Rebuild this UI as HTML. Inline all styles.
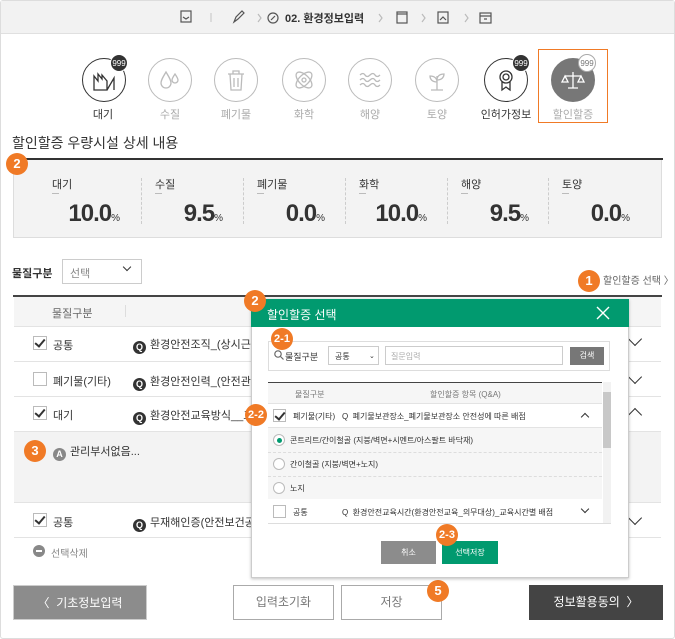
<!DOCTYPE html>
<html><head><meta charset="utf-8"><style>
*{box-sizing:border-box;margin:0;padding:0}
body{width:675px;height:639px;background:#fff;font-family:"Liberation Sans","Noto Sans CJK KR",sans-serif;color:#333;position:relative;overflow:hidden;font-size:11px}
.a{position:absolute}
.frame{left:0;top:0;width:675px;height:639px;border:1px solid #ddd;border-radius:3px}
.top{left:1px;top:1px;width:673px;height:33px;background:#f2f2f2;border-bottom:1px solid #e0e0e0}
.badge{position:absolute;width:22px;height:22px;border-radius:50%;background:#f07a26;color:#fff;font-weight:bold;font-size:13px;text-align:center;line-height:22px}
.ic{position:absolute;width:44px;height:44px;border-radius:50%;border:1.5px solid #bbb;background:#fff}
.ic.d{border-color:#333}
.lab{position:absolute;font-size:11px;color:#aaa;width:70px;text-align:center}
.n999{position:absolute;width:18px;height:18px;border-radius:50%;background:#333;color:#fff;font-size:8px;text-align:center;line-height:18px;border:1px solid #fff}
.col{position:absolute;top:158px;height:80px;width:110px}
.col .t{position:absolute;left:14px;top:18px;font-size:11px;color:#333}
.col .u{position:absolute;left:14px;top:35px;width:7px;height:1px;background:#bbb}
.col .v{position:absolute;right:28px;top:42px;font-size:24px;font-weight:bold;color:#333;letter-spacing:-1px}
.col .v small{font-size:10px;font-weight:normal;letter-spacing:0}
.sep{position:absolute;top:178px;height:46px;border-left:1px dashed #ccc}
.cb{position:absolute;width:14px;height:14px;border:1px solid #bbb;background:#fff}
.cb.on::after{content:"";position:absolute;left:3px;top:0px;width:4px;height:8px;border:solid #333;border-width:0 2px 2px 0;transform:rotate(40deg)}
.q{display:inline-block;width:13px;height:13px;border-radius:50%;background:#333;color:#fff;font-size:9px;font-weight:bold;text-align:center;line-height:13px;margin-right:4px;vertical-align:-2px}
.row{position:absolute;left:14px;width:647px;border-bottom:1px solid #e3e3e3}
.chev{position:absolute;width:10px;height:10px;border:solid #333;border-width:0 1.5px 1.5px 0}
.btn{position:absolute;text-align:center;font-size:12px}
.radio{position:absolute;width:12px;height:12px;border-radius:50%;border:1px solid #bbb;background:#fff}
.qt{position:absolute;left:133px;font-size:11px}
</style></head><body>
<div class="a frame"></div>
<div class="a top"></div>
<svg class="a" style="left:180px;top:8px" width="320" height="20" fill="none" stroke="#555" stroke-width="1.2">
<rect x="1" y="3" width="10" height="11"/><path d="M3 9l3 2 3-2"/>
<line x1="31" y1="5" x2="31" y2="14" stroke="#ccc"/>
<path d="M54 14l2-5 6-6 2 2-6 6z"/>
<path d="M78 6l3 4-3 4" stroke="#bbb"/>
<circle cx="93" cy="10" r="5"/><path d="M91 12l4-4"/>
<path d="M199 6l3 4-3 4" stroke="#bbb"/>
<rect x="217" y="4" width="10" height="11"/><path d="M217 6h10"/>
<path d="M242 6l3 4-3 4" stroke="#bbb"/>
<rect x="258" y="4" width="10" height="11"/><path d="M260 12l3-3 3 3"/>
<path d="M285 6l3 4-3 4" stroke="#bbb"/>
<rect x="300" y="5" width="11" height="10"/><path d="M300 8h11M304 11h3"/>
</svg>
<div class="a" style="left:285px;top:10px;font-size:11px;font-weight:bold;color:#333">02. 환경정보입력</div>

<div class="ic d" style="left:82px;top:58px"></div><div class="n999" style="left:110px;top:54px">999</div>
<svg class="a" style="left:92px;top:68px" width="24" height="24" fill="none" stroke="#333" stroke-width="1.3"><path d="M2 22V8l4 5V6l4 5V7l5 6v9zM15 22l7-12v12"/></svg>
<div class="lab" style="left:68px;top:106px;color:#333">대기</div>
<div class="ic" style="left:148px;top:58px"></div>
<svg class="a" style="left:158px;top:68px" width="24" height="24" fill="none" stroke="#bbb" stroke-width="1.3"><path d="M8 4c-3 5-5 8-5 11a5 5 0 0010 0c0-3-2-6-5-11zM17 6c-2 3-3 5-3 6a3 3 0 006 0c0-1-1-3-3-6z"/></svg>
<div class="lab" style="left:135px;top:106px">수질</div>
<div class="ic" style="left:214px;top:58px"></div>
<svg class="a" style="left:224px;top:68px" width="24" height="24" fill="none" stroke="#bbb" stroke-width="1.3"><path d="M4 6h16M9 6V3h6v3M6 6l1 16h10l1-16M10 10v9M14 10v9"/></svg>
<div class="lab" style="left:201px;top:106px">폐기물</div>
<div class="ic" style="left:282px;top:58px"></div>
<svg class="a" style="left:292px;top:68px" width="24" height="24" fill="none" stroke="#bbb" stroke-width="1.3"><ellipse cx="12" cy="12" rx="10" ry="5" transform="rotate(45 12 12)"/><ellipse cx="12" cy="12" rx="10" ry="5" transform="rotate(-45 12 12)"/><circle cx="12" cy="12" r="2"/></svg>
<div class="lab" style="left:269px;top:106px">화학</div>
<div class="ic" style="left:348px;top:58px"></div>
<svg class="a" style="left:358px;top:68px" width="24" height="24" fill="none" stroke="#bbb" stroke-width="1.3"><path d="M2 7q3-3 5 0t5 0 5 0 5 0M2 12q3-3 5 0t5 0 5 0 5 0M2 17q3-3 5 0t5 0 5 0 5 0"/></svg>
<div class="lab" style="left:335px;top:106px">해양</div>
<div class="ic" style="left:415px;top:58px"></div>
<svg class="a" style="left:425px;top:68px" width="24" height="24" fill="none" stroke="#bbb" stroke-width="1.3"><path d="M12 22V8M12 14c-5 0-7-3-7-6 4 0 7 2 7 6zM12 12c5 0 7-3 7-6-4 0-7 2-7 6zM6 22h12"/></svg>
<div class="lab" style="left:402px;top:106px">토양</div>
<div class="ic d" style="left:484px;top:58px"></div><div class="n999" style="left:512px;top:54px">999</div>
<svg class="a" style="left:494px;top:68px" width="24" height="24" fill="none" stroke="#333" stroke-width="1.3"><circle cx="12" cy="9" r="6"/><circle cx="12" cy="9" r="3"/><path d="M8 14v8l4-3 4 3v-8"/></svg>
<div class="lab" style="left:471px;top:106px;color:#333">인허가정보</div>
<div class="a" style="left:538px;top:49px;width:70px;height:74px;border:1px solid #f07a26"></div>
<div class="ic" style="left:551px;top:58px;background:#777;border-color:#777"></div>
<div class="n999" style="left:578px;top:54px;background:#fff;color:#777;border:1px solid #aaa">999</div>
<svg class="a" style="left:561px;top:68px" width="24" height="24" fill="none" stroke="#fff" stroke-width="1.3"><path d="M12 4v16M7 20h10M4 8h16M4 8l-3 6h6zM20 8l-3 6h6z"/></svg>
<div class="lab" style="left:538px;top:106px">할인할증</div>

<div class="a" style="left:12px;top:133px;font-size:14px;color:#333">할인할증 우량시설 상세 내용</div>
<div class="a" style="left:12px;top:158px;width:651px;height:2px;background:#333"></div>
<div class="a" style="left:13px;top:160px;width:649px;height:78px;background:#f3f3f3;border:1px solid #ddd;border-top:none"></div>
<div class="badge" style="left:6px;top:153px">2</div>
<div class="col" style="left:38px"><div class="t">대기</div><div class="u"></div><div class="v">10.0<small>%</small></div></div>
<div class="sep" style="left:141px"></div>
<div class="col" style="left:141px"><div class="t">수질</div><div class="u"></div><div class="v">9.5<small>%</small></div></div>
<div class="sep" style="left:243px"></div>
<div class="col" style="left:243px"><div class="t">폐기물</div><div class="u"></div><div class="v">0.0<small>%</small></div></div>
<div class="sep" style="left:345px"></div>
<div class="col" style="left:345px"><div class="t">화학</div><div class="u"></div><div class="v">10.0<small>%</small></div></div>
<div class="sep" style="left:447px"></div>
<div class="col" style="left:447px"><div class="t">해양</div><div class="u"></div><div class="v">9.5<small>%</small></div></div>
<div class="sep" style="left:548px"></div>
<div class="col" style="left:548px"><div class="t">토양</div><div class="u"></div><div class="v">0.0<small>%</small></div></div>

<div class="a" style="left:12px;top:265px;font-size:11px;font-weight:bold">물질구분</div>
<div class="a" style="left:62px;top:259px;width:80px;height:25px;border:1px solid #ccc;font-size:11px;color:#888;padding:5px 0 0 7px">선택</div>
<div class="chev" style="left:124px;top:264px;transform:rotate(45deg);width:6px;height:6px;border-width:0 1.2px 1.2px 0"></div>
<div class="a" style="left:603px;top:272px;font-size:10px;color:#666">할인할증 선택 〉</div>
<div class="badge" style="left:578px;top:270px">1</div>

<div class="a" style="left:13px;top:295px;width:649px;height:2px;background:#444"></div>
<div class="row" style="top:297px;height:30px;background:#f5f5f5"></div>
<div class="a" style="left:52px;top:305px;color:#666">물질구분</div>
<div class="a" style="left:125px;top:305px;height:12px;border-left:1px solid #ddd"></div>
<div class="row" style="top:327px;height:35px"></div>
<div class="cb on" style="left:33px;top:336px"></div><div class="a" style="left:53px;top:337px">공통</div>
<div class="qt" style="top:336px"><span class="q">Q</span>환경안전조직_(상시근로자</div>
<div class="row" style="top:362px;height:35px"></div>
<div class="cb" style="left:33px;top:372px"></div><div class="a" style="left:53px;top:373px">폐기물(기타)</div>
<div class="qt" style="top:373px"><span class="q">Q</span>환경안전인력_(안전관리인</div>
<div class="row" style="top:397px;height:35px"></div>
<div class="cb on" style="left:33px;top:406px"></div><div class="a" style="left:53px;top:407px">대기</div>
<div class="qt" style="top:407px"><span class="q">Q</span>환경안전교육방식__교육</div>
<div class="row" style="top:432px;height:71px;background:#f3f3f3"></div>
<div class="badge" style="left:24px;top:440px">3</div>
<div class="a" style="left:53px;top:443px;font-size:11px"><span class="q" style="background:#888">A</span>관리부서없음...</div>
<div class="row" style="top:503px;height:35px"></div>
<div class="cb on" style="left:33px;top:513px"></div><div class="a" style="left:53px;top:514px">공통</div>
<div class="qt" style="top:514px"><span class="q">Q</span>무재해인증(안전보건공단</div>
<div class="chev" style="left:630px;top:334px;transform:rotate(45deg)"></div>
<div class="chev" style="left:630px;top:372px;transform:rotate(45deg)"></div>
<div class="chev" style="left:630px;top:410px;transform:rotate(-135deg)"></div>
<div class="chev" style="left:630px;top:513px;transform:rotate(45deg)"></div>
<div class="a" style="left:33px;top:545px;width:12px;height:12px;border-radius:50%;background:#888"></div>
<div class="a" style="left:36px;top:550px;width:6px;height:2px;background:#fff"></div>
<div class="a" style="left:51px;top:545px;font-size:10px;color:#888">선택삭제</div>

<div class="btn" style="left:13px;top:585px;width:134px;height:35px;background:#8c8c8c;color:#fff;line-height:35px;border:1px solid #ccc">〈 &nbsp;기초정보입력</div>
<div class="btn" style="left:233px;top:585px;width:101px;height:35px;border:1px solid #aaa;color:#777;line-height:33px">입력초기화</div>
<div class="btn" style="left:341px;top:585px;width:101px;height:35px;border:1px solid #aaa;color:#777;line-height:33px">저장</div>
<div class="badge" style="left:427px;top:580px">5</div>
<div class="btn" style="left:529px;top:585px;width:134px;height:35px;background:#444;color:#fff;line-height:35px">정보활용동의 &nbsp;〉</div>

<div class="a" style="left:251px;top:299px;width:378px;height:279px;background:#fff;border:1px solid #ccc;box-shadow:0 1px 3px rgba(0,0,0,.25)"></div>
<div class="a" style="left:251px;top:299px;width:378px;height:28px;background:#019a6f"></div>
<div class="a" style="left:267px;top:306px;color:#fff;font-size:12px">할인할증 선택</div>
<svg class="a" style="left:596px;top:306px" width="14" height="14" stroke="#fff" stroke-width="1.4"><path d="M1 1l12 12M13 1L1 13"/></svg>
<div class="badge" style="left:244px;top:290px">2</div>
<div class="a" style="left:268px;top:341px;width:342px;height:30px;border:1px solid #ddd"></div>
<div class="badge" style="left:271px;top:328px;font-size:11px">2-1</div>
<svg class="a" style="left:274px;top:350px" width="10" height="10" fill="none" stroke="#666" stroke-width="1.2"><circle cx="4" cy="4" r="3.2"/><path d="M6.5 6.5l3 3"/></svg>
<div class="a" style="left:285px;top:350px;font-size:9px">물질구분</div>
<div class="a" style="left:328px;top:346px;width:51px;height:19px;border:1px solid #ccc;font-size:8px;padding:4px 0 0 6px">공통</div>
<div class="a" style="left:369px;top:352px;font-size:7px">⌄</div>
<div class="a" style="left:385px;top:346px;width:178px;height:19px;border:1px solid #ccc;font-size:8px;color:#aaa;padding:4px 0 0 5px">질문입력</div>
<div class="a" style="left:570px;top:347px;width:34px;height:18px;background:#777;color:#fff;font-size:8px;text-align:center;line-height:18px">검색</div>
<div class="a" style="left:268px;top:382px;width:334px;height:1px;background:#444"></div>
<div class="a" style="left:268px;top:383px;width:334px;height:21px;background:#f6f6f6;border-bottom:1px solid #e3e3e3"></div>
<div class="a" style="left:295px;top:389px;font-size:8px;color:#777">물질구분</div>
<div class="a" style="left:430px;top:389px;font-size:8px;color:#777">할인할증 항목 (Q&amp;A)</div>
<div class="a" style="left:603px;top:382px;width:8px;height:141px;background:#f2f2f2"></div>
<div class="a" style="left:603px;top:392px;width:8px;height:56px;background:#c8c8c8"></div>
<div class="a" style="left:268px;top:404px;width:334px;height:24px;border-bottom:1px solid #e3e3e3"></div>
<div class="cb on" style="left:273px;top:409px;width:13px;height:13px"></div>
<div class="badge" style="left:245px;top:404px;font-size:11px">2-2</div>
<div class="a" style="left:293px;top:411px;font-size:8px">폐기물(기타)</div>
<div class="a" style="left:342px;top:411px;font-size:8px">Q &nbsp;폐기물보관장소_폐기물보관장소 안전성에 따른 배점</div>
<div class="chev" style="left:582px;top:414px;width:6px;height:6px;transform:rotate(-135deg)"></div>
<div class="a" style="left:268px;top:428px;width:334px;height:71px;background:#f6f6f6"></div>
<div class="a" style="left:268px;top:452px;width:334px;border-top:1px dashed #ddd"></div>
<div class="a" style="left:268px;top:476px;width:334px;border-top:1px dashed #ddd"></div>
<div class="radio" style="left:273px;top:434px"></div><div class="a" style="left:277px;top:438px;width:5px;height:5px;border-radius:50%;background:#019a6f"></div>
<div class="a" style="left:290px;top:435px;font-size:8px">콘트리트/간이철골 (지붕/벽면+시멘트/아스팔트 바닥재)</div>
<div class="radio" style="left:273px;top:458px"></div><div class="a" style="left:290px;top:459px;font-size:8px">간이철골 (지붕/벽면+노지)</div>
<div class="radio" style="left:273px;top:482px"></div><div class="a" style="left:290px;top:483px;font-size:8px">노지</div>
<div class="cb" style="left:273px;top:505px;width:13px;height:13px"></div>
<div class="a" style="left:293px;top:507px;font-size:8px">공통</div>
<div class="a" style="left:342px;top:507px;font-size:8px">Q &nbsp;환경안전교육시간(환경안전교육_의무대상)_교육시간별 배점</div>
<div class="chev" style="left:582px;top:506px;width:6px;height:6px;transform:rotate(45deg)"></div>
<div class="a" style="left:268px;top:523px;width:343px;height:1px;background:#ddd"></div>
<div class="a" style="left:381px;top:541px;width:55px;height:23px;background:#8c8c8c;color:#fff;font-size:8px;text-align:center;line-height:23px">취소</div>
<div class="a" style="left:442px;top:541px;width:56px;height:23px;background:#019a6f;color:#fff;font-size:8px;text-align:center;line-height:23px">선택저장</div>
<div class="badge" style="left:436px;top:524px;font-size:11px">2-3</div>
</body></html>
